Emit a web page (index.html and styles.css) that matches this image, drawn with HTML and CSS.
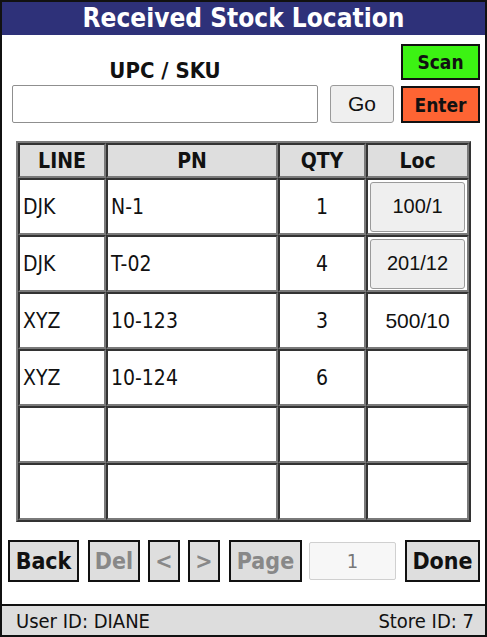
FILE: index.html
```html
<!DOCTYPE html>
<html>
<head>
<meta charset="utf-8">
<link rel="stylesheet" href="styles.css">
</head>
<body>
<div class="app">
  <div class="title">Received Stock Location</div>
  <div class="main">
    <div class="scan-row">
      <div class="entry">
        <div class="entry-label">UPC / SKU</div>
        <input class="entry-input" type="text">
      </div>
      <button class="go-btn">Go</button>
      <div class="mode">
        <button class="mode-btn scan">Scan</button>
        <button class="mode-btn enter">Enter</button>
      </div>
    </div>
    <table class="grid">
      <colgroup>
        <col class="c-line"><col class="c-pn"><col class="c-qty"><col class="c-loc">
      </colgroup>
      <thead>
        <tr><th>LINE</th><th>PN</th><th>QTY</th><th>Loc</th></tr>
      </thead>
      <tbody>
        <tr><td>DJK</td><td>N-1</td><td class="num">1</td><td class="loc"><button class="loc-btn">100/1</button></td></tr>
        <tr><td>DJK</td><td>T-02</td><td class="num">4</td><td class="loc"><button class="loc-btn">201/12</button></td></tr>
        <tr><td>XYZ</td><td>10-123</td><td class="num">3</td><td class="loc loc-text">500/10</td></tr>
        <tr><td>XYZ</td><td>10-124</td><td class="num">6</td><td class="loc"></td></tr>
        <tr><td></td><td></td><td></td><td></td></tr>
        <tr><td></td><td></td><td></td><td></td></tr>
      </tbody>
    </table>
    <div class="actions">
      <button class="act back">Back</button>
      <button class="act del off">Del</button>
      <button class="act arrow off">&lt;</button>
      <button class="act arrow off">&gt;</button>
      <button class="act page off">Page</button>
      <input class="page-input" type="text" value="1" disabled>
      <button class="act done">Done</button>
    </div>
  </div>
  <div class="status">
    <span>User ID: DIANE</span>
    <span>Store ID: 7</span>
  </div>
</div>
</body>
</html>
```
FILE: styles.css
```css
html, body {
  margin: 0;
  padding: 0;
  background: #ffffff;
}
.app {
  box-sizing: border-box;
  width: 487px;
  height: 637px;
  border: 2px solid #111111;
  display: flex;
  flex-direction: column;
  font-family: "DejaVu Sans Condensed", "DejaVu Sans", sans-serif;
  font-stretch: condensed;
  color: #111111;
}
.title {
  height: 33px;
  background: #2e3179;
  color: #ffffff;
  font-weight: bold;
  font-size: 26px;
  line-height: 33px;
  text-align: center;
}
.main {
  flex: 1;
  display: flex;
  flex-direction: column;
}
.scan-row {
  display: flex;
  align-items: flex-end;
  padding: 9px 0 0 10px;
}
.entry {
  width: 306px;
  display: flex;
  flex-direction: column;
}
.entry-label {
  text-align: center;
  font-weight: bold;
  font-size: 22px;
  line-height: 26px;
  margin-bottom: 1px;
}
.entry-input {
  box-sizing: border-box;
  height: 38px;
  width: 306px;
  margin: 0;
  border: 1px solid #8f8f8f;
  border-radius: 2px;
  background: #ffffff;
}
.go-btn {
  box-sizing: border-box;
  margin: 0 0 0 12px;
  width: 64px;
  height: 38px;
  background: #efefef;
  border: 1px solid #9a9a9a;
  border-radius: 3px;
  font-family: "Liberation Sans", Arial, sans-serif;
  font-size: 21px;
  color: #111111;
  padding: 0;
}
.mode {
  margin-left: 7px;
  display: flex;
  flex-direction: column;
  gap: 6px;
}
.mode-btn {
  box-sizing: border-box;
  width: 79px;
  height: 37px;
  margin: 0;
  padding: 0;
  border: 2px solid #111111;
  font-family: "DejaVu Sans Condensed", "DejaVu Sans", sans-serif;
  font-stretch: condensed;
  font-weight: bold;
  font-size: 19px;
  color: #111111;
}
.scan { background: #3cf313; height: 36px; }
.enter { background: #fe6433; }
.grid {
  margin: 18px 0 0 14px;
  width: 455px;
  table-layout: fixed;
  border-collapse: separate;
  border-spacing: 0;
  border: 2px solid;
  border-color: #7a7a7a #333333 #333333 #7a7a7a;
}
.c-line { width: 88px; }
.c-pn { width: 172px; }
.c-qty { width: 88px; }
.c-loc { width: 103px; }
.grid th, .grid td {
  border: 2px solid;
  border-color: #333333 #7a7a7a #7a7a7a #333333;
  padding: 0 3px;
  font-size: 21px;
  overflow: hidden;
}
.grid th {
  height: 31px;
  background: #dedede;
  font-weight: bold;
  font-size: 21px;
  text-align: center;
}
.grid td {
  height: 53px;
  text-align: left;
  background: #ffffff;
}
.grid td.num { text-align: center; }
.grid td.loc { text-align: center; padding: 0 2px; }
.loc-text { font-family: "Liberation Sans", Arial, sans-serif; font-size: 20px; }
.loc-btn {
  box-sizing: border-box;
  width: 95px;
  height: 50px;
  margin: 0;
  padding: 0;
  background: #efefef;
  border: 1px solid #9a9a9a;
  border-radius: 3px;
  font-family: "Liberation Sans", Arial, sans-serif;
  font-size: 20px;
  color: #111111;
}
.actions {
  display: flex;
  align-items: center;
  margin: 18px 0 0 6px;
  gap: 8px;
}
.act {
  box-sizing: border-box;
  height: 42px;
  margin: 0;
  padding: 0;
  background: #dedede;
  border: 2px solid #111111;
  font-family: "DejaVu Sans Condensed", "DejaVu Sans", sans-serif;
  font-stretch: condensed;
  font-weight: bold;
  font-size: 23px;
  color: #111111;
}
.act.off { color: #888888; }
.back { width: 71px; }
.del { width: 52px; margin-left: 1px; }
.arrow { width: 32px; }
.page { width: 73px; margin-left: 1px; }
.done { width: 75px; margin-left: 1px; }
.page-input {
  box-sizing: border-box;
  width: 87px;
  height: 38px;
  margin: 0 0 0 -1px;
  border: 1px solid #d0d0d0;
  border-radius: 2px;
  background: #f7f7f7;
  text-align: center;
  font-family: "DejaVu Sans Condensed", "DejaVu Sans", sans-serif;
  font-stretch: condensed;
  font-size: 20px;
  color: #777777;
}
.status {
  height: 29px;
  border-top: 2px solid #111111;
  background: #dddddd;
  display: flex;
  justify-content: space-between;
  align-items: center;
  padding: 0 11px 0 14px;
  font-size: 20px;
  color: #111111;
}
```
